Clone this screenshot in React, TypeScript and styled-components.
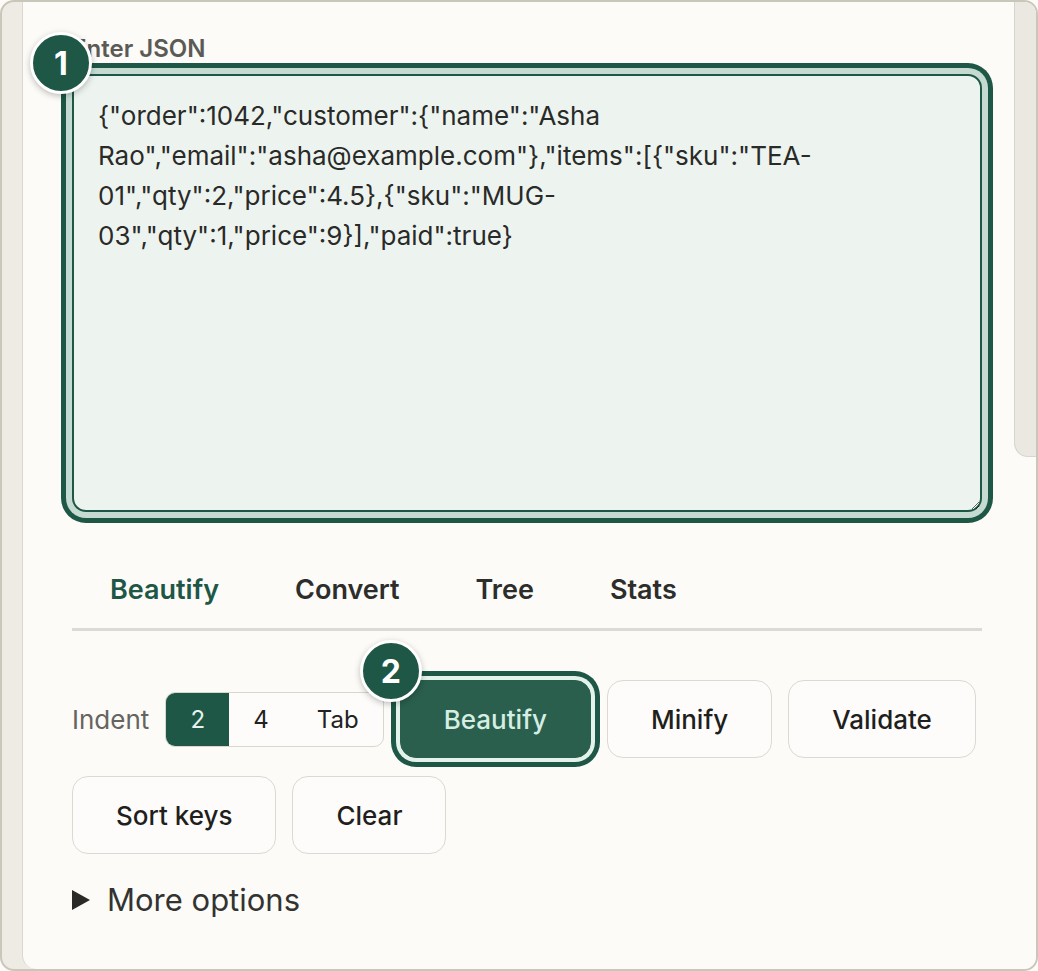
import React, { useState } from "react";
import styled, { createGlobalStyle } from "styled-components";

const GREEN = "#1e5746";
const FONT = `Inter, "Liberation Sans", Arial, sans-serif`;

const GlobalStyle = createGlobalStyle`
  html, body {
    margin: 0;
    padding: 0;
    background: #fcfbf8;
  }
  * {
    box-sizing: border-box;
  }
`;

const SAMPLE =
  '{"order":1042,"customer":{"name":"Asha Rao","email":"asha@example.com"},"items":[{"sku":"TEA-01","qty":2,"price":4.5},{"sku":"MUG-03","qty":1,"price":9}],"paid":true}';

const TABS = ["Beautify", "Convert", "Tree", "Stats"];
const INDENTS = ["2", "4", "Tab"];

export default function App() {
  const [json, setJson] = useState(SAMPLE);
  const [tab, setTab] = useState("Beautify");
  const [indent, setIndent] = useState("2");

  return (
    <>
      <GlobalStyle />
      <Style.Frame>
        <Style.Gutter />
        <Style.Panel>
          <Style.Content>
            <Style.Label htmlFor="json-input">Enter JSON</Style.Label>
            <Style.Spot>
              <Style.Input id="json-input" value={json} onChange={(e) => setJson(e.target.value)} spellCheck={false} />
              <Style.Badge $ring={11}>1</Style.Badge>
            </Style.Spot>

            <Style.Tabs>
              {TABS.map((t) => (
                <Style.Tab key={t} $active={tab === t} onClick={() => setTab(t)}>
                  {t}
                </Style.Tab>
              ))}
            </Style.Tabs>

            <Style.Controls>
              <Style.IndentLabel>Indent</Style.IndentLabel>
              <Style.Segmented>
                {INDENTS.map((i) => (
                  <Style.Segment key={i} $active={indent === i} onClick={() => setIndent(i)}>
                    {i}
                  </Style.Segment>
                ))}
              </Style.Segmented>
              <Style.Spot>
                <Style.Button $primary>Beautify</Style.Button>
                <Style.Badge $ring={9}>2</Style.Badge>
              </Style.Spot>
              <Style.Button>Minify</Style.Button>
              <Style.Button>Validate</Style.Button>
              <Style.Button>Sort keys</Style.Button>
              <Style.Button>Clear</Style.Button>
            </Style.Controls>

            <Style.More>
              <Style.Caret />
              More options
            </Style.More>
          </Style.Content>

          <Style.Scrollbar>
            <Style.Thumb />
          </Style.Scrollbar>
        </Style.Panel>
      </Style.Frame>
    </>
  );
}

const Style = {
  Frame: styled.div`
    display: flex;
    width: 1038px;
    height: 971px;
    border: 2px solid #c9c6ba;
    border-radius: 14px;
    overflow: hidden;
    background: #eeebe4;
    font-family: ${FONT};
  `,
  Gutter: styled.div`
    width: 20px;
    flex: none;
  `,
  Panel: styled.div`
    flex: 1;
    display: flex;
    background: #fcfbf8;
    border-left: 1px solid #dad7ce;
    border-bottom-left-radius: 14px;
  `,
  Content: styled.div`
    width: 910px;
    margin-left: 49px;
    padding-top: 35px;
  `,
  Label: styled.label`
    display: block;
    font-size: 24px;
    line-height: 24px;
    font-weight: 600;
    color: #5b5a55;
    margin-bottom: 13px;
  `,
  Spot: styled.div`
    position: relative;
    display: flex;
    flex: none;
  `,
  Badge: styled.span<{ $ring: number }>`
    position: absolute;
    left: ${({ $ring }) => -$ring - 31}px;
    top: ${({ $ring }) => -$ring - 31}px;
    width: 62px;
    height: 62px;
    border-radius: 50%;
    border: 3px solid #fff;
    background: ${GREEN};
    color: #fff;
    display: grid;
    place-items: center;
    font-size: 32px;
    font-weight: 700;
    box-shadow: 0 2px 6px rgba(0, 0, 0, 0.25);
    z-index: 2;
  `,
  Input: styled.textarea`
    width: 910px;
    height: 438px;
    margin: 0;
    padding: 20px 24px;
    border: 2px solid ${GREEN};
    border-radius: 14px;
    background: #edf4f0;
    color: #2a2a28;
    font-family: ${FONT};
    font-size: 26px;
    line-height: 40px;
    box-shadow: 0 0 0 6px #c5dbd1, 0 0 0 11px ${GREEN};
    outline: none;
    resize: both;
  `,
  Tabs: styled.div`
    display: flex;
    margin-top: 48px;
    border-bottom: 3px solid #dddad3;
  `,
  Tab: styled.button<{ $active?: boolean }>`
    padding: 16px 38px 24px;
    border: none;
    background: none;
    font-family: ${FONT};
    font-size: 27px;
    line-height: 28px;
    font-weight: 600;
    color: ${({ $active }) => ($active ? GREEN : "#2d2d2b")};
    cursor: pointer;
  `,
  Controls: styled.div`
    display: flex;
    flex-wrap: wrap;
    align-items: center;
    gap: 18px 16px;
    margin-top: 49px;
  `,
  IndentLabel: styled.span`
    font-size: 26px;
    color: #66645f;
  `,
  Segmented: styled.div`
    display: flex;
    height: 55px;
    border: 1.5px solid #d9d6ce;
    border-radius: 10px;
    overflow: hidden;
    background: #fdfcfa;
  `,
  Segment: styled.button<{ $active?: boolean }>`
    min-width: 63px;
    padding: 0 24px;
    border: none;
    background: ${({ $active }) => ($active ? GREEN : "transparent")};
    color: ${({ $active }) => ($active ? "#e6f3ec" : "#222")};
    font-family: ${FONT};
    font-size: 24px;
    cursor: pointer;
  `,
  Button: styled.button<{ $primary?: boolean }>`
    height: 78px;
    padding: 0 43px;
    border-radius: 16px;
    border: 1.5px solid ${({ $primary }) => ($primary ? "#2a5f4d" : "#dcd9d2")};
    background: ${({ $primary }) => ($primary ? "#2a5f4d" : "#fdfcfa")};
    color: ${({ $primary }) => ($primary ? "#d5eee3" : "#1f1f1e")};
    font-family: ${FONT};
    font-size: 26px;
    font-weight: 500;
    cursor: pointer;
    box-shadow: ${({ $primary }) => ($primary ? `0 0 0 4px #e3f2ea, 0 0 0 9px ${GREEN}` : "none")};
  `,
  More: styled.div`
    display: flex;
    align-items: center;
    gap: 17px;
    margin-top: 32px;
    font-size: 31px;
    line-height: 28px;
    color: #333331;
    cursor: pointer;
  `,
  Caret: styled.span`
    width: 0;
    height: 0;
    border-top: 10px solid transparent;
    border-bottom: 10px solid transparent;
    border-left: 18px solid #2a2a28;
  `,
  Scrollbar: styled.div`
    margin-left: auto;
    width: 22px;
    flex: none;
  `,
  Thumb: styled.div`
    height: 455px;
    background: #ebe8e1;
    border-left: 1.5px solid #d8d5cc;
    border-bottom: 1.5px solid #d8d5cc;
    border-bottom-left-radius: 14px;
  `,
};
